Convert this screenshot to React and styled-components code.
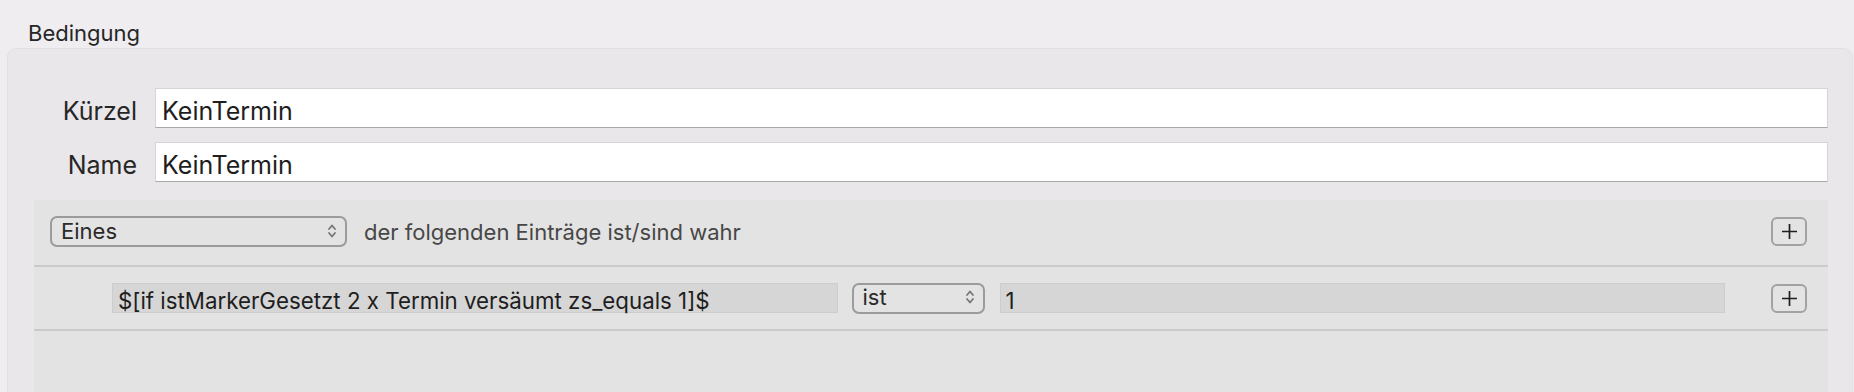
import React from "react";
import styled, { createGlobalStyle } from "styled-components";

const Global = createGlobalStyle`
  html, body { margin: 0; padding: 0; background: #efedf0; }
  body { font-family: Inter, "Open Sans", sans-serif; color: #222; overflow: hidden; }
`;

const Page = styled.div`
  width: 1854px;
  height: 392px;
  display: flex;
  flex-direction: column;
  padding-top: 20px;
  box-sizing: border-box;
`;

const Title = styled.div`
  font-size: 22px;
  line-height: 26px;
  color: #262626;
  padding-left: 28px;
  height: 28px;
`;

const GroupBox = styled.div`
  margin-left: 7px;
  margin-right: 1px;
  flex: 1;
  background: #e9e7ea;
  border: 1px solid #e2e0e3;
  border-bottom: none;
  border-radius: 9px 9px 0 0;
  padding: 39px 24px 0 0;
  display: flex;
  flex-direction: column;
`;

const FormRow = styled.div`
  display: flex;
  align-items: center;
  gap: 18px;
  margin-bottom: ${(p) => p.$gap || 0}px;
`;

const Label = styled.div`
  width: 129px;
  padding-top: 5px;
  text-align: right;
  font-size: 25px;
  color: #262626;
`;

const TextField = styled.div`
  flex: 1;
  height: 40px;
  box-sizing: border-box;
  background: #ffffff;
  border: 1px solid #d6d4d7;
  border-bottom: 1.5px solid #a9a8aa;
  display: flex;
  align-items: center;
  padding: 5px 0 0 6px;
  font-size: 25px;
  color: #1e1e1e;
`;

const Conditions = styled.div`
  margin: 18px 0 0 26px;
  flex: 1;
  background: #e3e3e3;
  display: flex;
  flex-direction: column;
`;

const HeaderRow = styled.div`
  height: 67px;
  display: flex;
  align-items: center;
  padding: 0 21px 2px 16px;
  border-bottom: 2px solid #cbcbcb;
  box-sizing: border-box;
`;

const CondRow = styled.div`
  height: 64px;
  display: flex;
  align-items: center;
  padding: 0 21px 0 78px;
  border-bottom: 2px solid #cbcbcb;
  box-sizing: border-box;
`;

const Popup = styled.div`
  width: ${(p) => p.$w}px;
  height: 31px;
  box-sizing: border-box;
  border: 2px solid #9b9b9b;
  border-radius: 7px;
  display: flex;
  align-items: center;
  justify-content: space-between;
  padding: 0 8px 2px 9px;
  font-size: 22px;
  color: #2a2a2a;
  flex-shrink: 0;
  margin-right: ${(p) => p.$mr || 0}px;
`;

const HeaderText = styled.div`
  font-size: 22px;
  color: #474747;
  flex: 1;
`;

const ValueField = styled.div`
  flex: 1;
  height: 30px;
  box-sizing: border-box;
  background: #d6d6d6;
  border: 1px solid #cdcdcd;
  display: flex;
  align-items: center;
  padding: 4px 0 0 5px;
  font-size: 22.3px;
  color: #1e1e1e;
  margin-right: ${(p) => p.$mr || 0}px;
`;

const PlusButton = styled.div`
  width: 36px;
  height: 29px;
  box-sizing: border-box;
  border: 2px solid #a2a2a2;
  border-radius: 6px;
  display: flex;
  align-items: center;
  justify-content: center;
  flex-shrink: 0;
  margin-left: ${(p) => p.$ml || 0}px;
`;

const Chevrons = () => (
  <svg width="10" height="18" viewBox="0 0 10 18">
    <path d="M2 7 L5 3.5 L8 7" fill="none" stroke="#767676" strokeWidth="1.8" strokeLinecap="round" strokeLinejoin="round" />
    <path d="M2 11 L5 14.5 L8 11" fill="none" stroke="#767676" strokeWidth="1.8" strokeLinecap="round" strokeLinejoin="round" />
  </svg>
);

const Plus = () => (
  <svg width="17" height="17" viewBox="0 0 17 17">
    <path d="M8.5 1 V16 M1 8.5 H16" stroke="#1f1f1f" strokeWidth="1.7" />
  </svg>
);

export default function App() {
  return (
    <>
      <Global />
      <Page>
        <Title>Bedingung</Title>
        <GroupBox>
          <FormRow $gap={14}>
            <Label>Kürzel</Label>
            <TextField>KeinTermin</TextField>
          </FormRow>
          <FormRow>
            <Label>Name</Label>
            <TextField>KeinTermin</TextField>
          </FormRow>
          <Conditions>
            <HeaderRow>
              <Popup $w={297} $mr={17}>
                <span>Eines</span>
                <Chevrons />
              </Popup>
              <HeaderText>der folgenden Einträge ist/sind wahr</HeaderText>
              <PlusButton>
                <Plus />
              </PlusButton>
            </HeaderRow>
            <CondRow>
              <ValueField $mr={14}>$[if istMarkerGesetzt 2 x Termin versäumt zs_equals 1]$</ValueField>
              <Popup $w={133} $mr={15}>
                <span>ist</span>
                <Chevrons />
              </Popup>
              <ValueField>1</ValueField>
              <PlusButton $ml={46}>
                <Plus />
              </PlusButton>
            </CondRow>
          </Conditions>
        </GroupBox>
      </Page>
    </>
  );
}
